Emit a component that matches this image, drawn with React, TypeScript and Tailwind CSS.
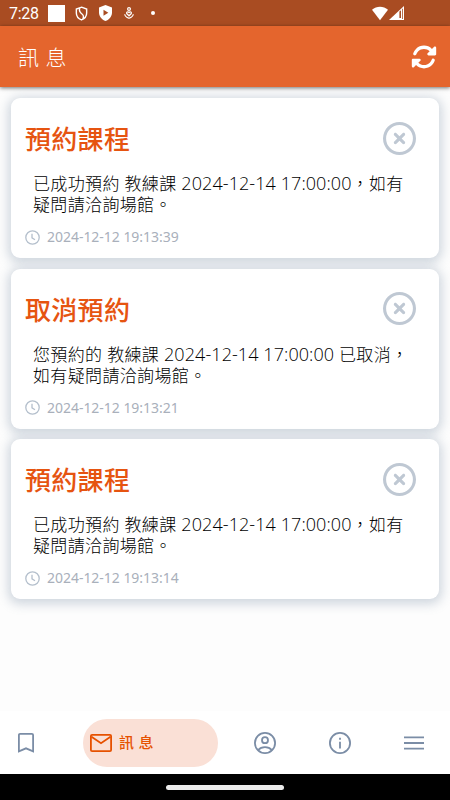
import { FaRegCircleXmark, FaRotate } from "react-icons/fa6";

type Message = {
  title: string;
  body: { text: string; latin?: boolean }[][];
  time: string;
};

const messages: Message[] = [
  {
    title: "預約課程",
    body: [
      [{ text: "已成功預約 教練課 " }, { text: "2024-12-14 17:00:00", latin: true }, { text: "，如有" }],
      [{ text: "疑問請洽詢場館。" }],
    ],
    time: "2024-12-12 19:13:39",
  },
  {
    title: "取消預約",
    body: [
      [{ text: "您預約的 教練課 " }, { text: "2024-12-14 17:00:00", latin: true }, { text: " 已取消，" }],
      [{ text: "如有疑問請洽詢場館。" }],
    ],
    time: "2024-12-12 19:13:21",
  },
  {
    title: "預約課程",
    body: [
      [{ text: "已成功預約 教練課 " }, { text: "2024-12-14 17:00:00", latin: true }, { text: "，如有" }],
      [{ text: "疑問請洽詢場館。" }],
    ],
    time: "2024-12-12 19:13:14",
  },
];

function StatusBar() {
  return (
    <div className="flex h-[26px] shrink-0 items-center bg-[#a94c22] pl-[9px] text-white">
      <span className="mt-[2px] w-[39px] font-[Roboto] text-[16px] leading-[26px] tracking-[-0.3px]">7:28</span>
      <div className="h-[17px] w-[17px] bg-white" />
      <svg className="ml-[10px] h-[15px] w-[13px]" viewBox="0 0 13 16" fill="none" stroke="white" strokeWidth="1.5">
        <path d="M6.5 1.2 12 3.2V7.5C12 11 9.7 13.6 6.5 14.8 3.3 13.6 1 11 1 7.5V3.2Z" />
        <path d="M4.6 2.2C3.4 5.8 5 7.1 7 8.5 8.8 9.8 9 11.6 8 13.8" />
      </svg>
      <svg className="ml-[11px] h-[16px] w-[13px]" viewBox="0 0 13 16">
        <path fill="white" d="M6.5 0 13 2.5V7.5C13 11.5 10.2 14.7 6.5 16 2.8 14.7 0 11.5 0 7.5V2.5Z" />
        <path fill="#a94c22" d="M4.5 4.8 9.3 7.8 4.5 10.8Z" />
      </svg>
      <svg className="ml-[12px] h-[12px] w-[10px]" viewBox="0 0 10 12" fill="none" stroke="white" strokeWidth="1.2">
        <circle cx="5" cy="2" r="1.4" />
        <path d="M5 8.8 2.9 6.8C1.8 5.3 3.9 4.1 5 5.6 6.1 4.1 8.2 5.3 7.1 6.8Z" />
        <path d="M.7 7.2C.9 9 3 10.5 5 11.3 7 10.5 9.1 9 9.3 7.2" />
      </svg>
      <div className="ml-[17px] h-[4px] w-[4px] rounded-full bg-white" />
      <svg className="ml-auto h-[15px] w-[16px]" viewBox="0 0 17 15" preserveAspectRatio="none">
        <path fill="white" d="M0 3.8C4.8-.2 12.2-.2 17 3.8L8.5 14.3Z" />
      </svg>
      <svg className="mr-[46px] ml-px h-[14px] w-[15px]" viewBox="0 0 15 14">
        <path fill="white" d="M15 0V14H0Z" />
        <path fill="#a94c22" d="M10.4 5.5 12 4.2V12H10.4ZM13.2 3 14 2.4V13H13.2Z" />
      </svg>
    </div>
  );
}

function Header() {
  return (
    <header className="z-10 flex h-[61px] shrink-0 items-center justify-between bg-[#e4652d] pr-[13px] pl-[18px] text-white shadow-[0_1px_4px_rgba(0,0,0,0.55)]">
      <h1 className="mt-[3px] text-[21px] font-light tracking-[6.5px]">訊息</h1>
      <FaRotate className="h-[26px] w-[26px]" />
    </header>
  );
}

function ClockIcon() {
  return (
    <svg className="h-[15px] w-[15px]" viewBox="0 0 15 15" fill="none" stroke="#b4bfcc" strokeWidth="1.3">
      <circle cx="7.5" cy="7.5" r="6.7" />
      <path d="M7 3.8V7.9L10 9.7" />
    </svg>
  );
}

function MessageCard(props: Message) {
  return (
    <article className="h-[160px] shrink-0 rounded-[9px] bg-white pr-[23px] pl-[14px] shadow-[0_2px_11px_3px_rgba(112,135,160,0.32)]">
      <div className="flex h-[72px] items-center justify-between pt-[8px]">
        <h2 className="mt-[2px] text-[26px] leading-[34px] font-medium tracking-[0.3px] text-[#e65410]">{props.title}</h2>
        <FaRegCircleXmark className="h-[33px] w-[33px] text-[#bfc8d3]" />
      </div>
      <div className="mt-[3px] pl-[8px] text-[17px] leading-[21px] font-light tracking-[0.35px] whitespace-pre text-black">
        {props.body.map((line, i) => (
          <p key={i}>
            {line.map((part, j) => (
              <span key={j} className={part.latin ? "text-[18px] leading-[21px] tracking-[0.08px]" : ""}>
                {part.text}
              </span>
            ))}
          </p>
        ))}
      </div>
      <div className="mt-[12px] flex items-center gap-[7px] text-[#a9b0bb]">
        <ClockIcon />
        <time className="font-['Noto_Sans'] text-[14px] leading-[20px] tracking-[-0.03px]">{props.time}</time>
      </div>
    </article>
  );
}

function BottomNav() {
  return (
    <nav className="flex h-[63px] shrink-0 items-center bg-white text-[#7b8da6]">
      <svg className="ml-[18px] h-[20px] w-[16px]" viewBox="0 0 16 20" fill="none" stroke="currentColor" strokeWidth="1.8">
        <path d="M.9 18.3V2.1Q.9.9 2.1.9H13.9Q15.1.9 15.1 2.1V18.3L8 15.3Z" />
      </svg>
      <div className="ml-[49px] flex h-[48px] w-[135px] items-center rounded-full bg-[#fae0d6] pl-[7px] text-[#e65100]">
        <svg className="h-[18px] w-[22px]" viewBox="0 0 22 18" fill="none" stroke="currentColor" strokeWidth="1.8">
          <rect x=".9" y=".9" width="20.2" height="16.2" rx="1.2" />
          <path d="M1.5 2.8 11 9.2 20.5 2.8" />
        </svg>
        <span className="ml-[7px] text-[15px] font-medium tracking-[4.5px]">訊息</span>
      </div>
      <div className="ml-[36px] flex flex-1 items-center justify-between pr-[26px]">
        <svg className="h-[22px] w-[22px]" viewBox="0 0 22 22" fill="none" stroke="currentColor" strokeWidth="1.8">
          <circle cx="11" cy="11" r="10.1" />
          <circle cx="11" cy="8.2" r="3" />
          <path d="M4.2 18C7.5 14.2 14.5 14.2 17.8 18" />
        </svg>
        <svg className="h-[22px] w-[22px]" viewBox="0 0 22 22" fill="none" stroke="currentColor" strokeWidth="1.8">
          <circle cx="11" cy="11" r="10.1" />
          <path d="M11 9.7V16.5M11 5.8V7.7" />
        </svg>
        <svg className="h-[14px] w-[20px]" viewBox="0 0 20 14" stroke="currentColor" strokeWidth="1.9">
          <path d="M0 1.4H20M0 7H20M0 12.6H20" />
        </svg>
      </div>
    </nav>
  );
}

export default function App() {
  return (
    <div className="flex h-[800px] w-[450px] flex-col overflow-hidden bg-[#fdfdfd] font-['Open_Sans','Noto_Sans_CJK_TC',sans-serif]">
      <StatusBar />
      <Header />
      <main className="flex flex-1 flex-col gap-[10.6px] px-[11px] pt-[11.3px]">
        {messages.map((message) => (
          <MessageCard key={message.time} {...message} />
        ))}
      </main>
      <BottomNav />
      <div className="flex h-[26px] shrink-0 items-center justify-center bg-black">
        <div className="h-[5px] w-[118px] rounded-full bg-[#ebebeb]" />
      </div>
    </div>
  );
}
